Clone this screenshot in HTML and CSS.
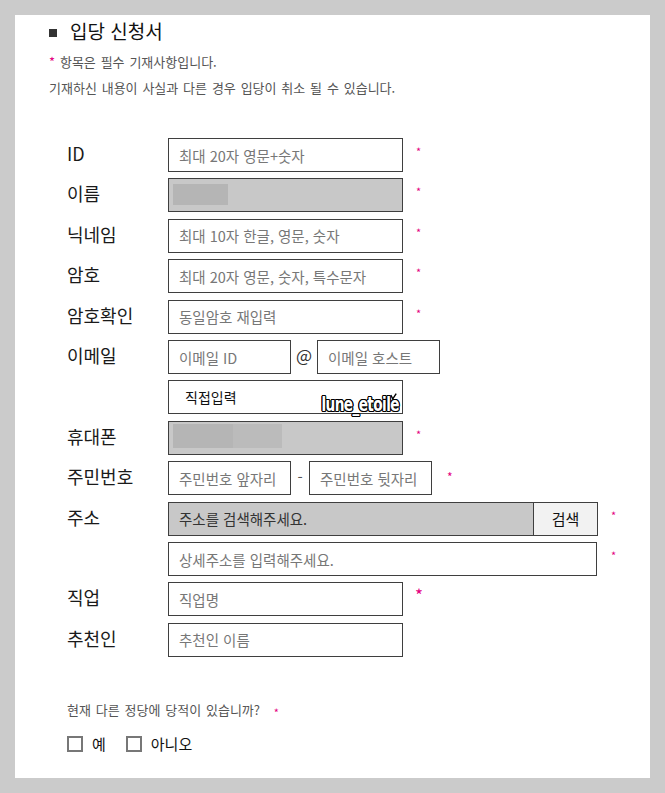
FILE: index.html
```html
<!DOCTYPE html>
<html lang="ko">
<head>
<meta charset="utf-8">
<title>입당 신청서</title>
<link rel="stylesheet" href="styles.css">
</head>
<body>
<div class="panel">
  <h1 class="title"><span class="bullet"></span>입당 신청서</h1>
  <p class="note note1"><span class="star">*</span> 항목은 필수 기재사항입니다.</p>
  <p class="note note2">기재하신 내용이 사실과 다른 경우 입당이 취소 될 수 있습니다.</p>

  <div class="form">
    <div class="row">
      <label class="label">ID</label>
      <input class="inp" placeholder="최대 20자 영문+숫자">
      <span class="req">*</span>
    </div>
    <div class="row">
      <label class="label">이름</label>
      <div class="inp gray pad5"><span class="blk b1" style="width:55px"></span></div>
      <span class="req">*</span>
    </div>
    <div class="row">
      <label class="label">닉네임</label>
      <input class="inp" placeholder="최대 10자 한글, 영문, 숫자">
      <span class="req">*</span>
    </div>
    <div class="row">
      <label class="label">암호</label>
      <input class="inp" placeholder="최대 20자 영문, 숫자, 특수문자">
      <span class="req">*</span>
    </div>
    <div class="row">
      <label class="label">암호확인</label>
      <input class="inp" placeholder="동일암호 재입력">
      <span class="req">*</span>
    </div>
    <div class="row">
      <label class="label">이메일</label>
      <input class="inp half" placeholder="이메일 ID">
      <span class="at">@</span>
      <input class="inp half" placeholder="이메일 호스트">
    </div>
    <div class="row">
      <span class="label"></span>
      <div class="inp sel">직접입력
        <span class="wm">lune_etoile</span>
        <svg class="caret" width="7" height="7" viewBox="0 0 7 7"><path d="M0.8 2.2 L2.8 5.8 L6.2 0.6" fill="none" stroke="#000" stroke-width="1.4"/></svg>
      </div>
    </div>
    <div class="row">
      <label class="label">휴대폰</label>
      <div class="inp gray pad3"><span class="blk b1" style="width:60px"></span><span class="blk b2" style="width:49px"></span></div>
      <span class="req">*</span>
    </div>
    <div class="row">
      <label class="label">주민번호</label>
      <input class="inp half" placeholder="주민번호 앞자리">
      <span class="dash">-</span>
      <input class="inp half" placeholder="주민번호 뒷자리">
      <span class="req req-ssn">*</span>
    </div>
    <div class="row">
      <label class="label">주소</label>
      <input class="inp addr gray" placeholder="주소를 검색해주세요." readonly>
      <button class="btn" type="button">검색</button>
      <span class="req">*</span>
    </div>
    <div class="row">
      <span class="label"></span>
      <input class="inp detail" placeholder="상세주소를 입력해주세요.">
      <span class="req req-detail">*</span>
    </div>
    <div class="row">
      <label class="label">직업</label>
      <input class="inp" placeholder="직업명">
      <span class="req big">*</span>
    </div>
    <div class="row">
      <label class="label">추천인</label>
      <input class="inp" placeholder="추천인 이름">
    </div>
  </div>

  <p class="question">현재 다른 정당에 당적이 있습니까? <span class="qstar">*</span></p>
  <div class="choices">
    <label class="choice"><input type="checkbox" class="cb">예</label>
    <label class="choice"><input type="checkbox" class="cb">아니오</label>
  </div>
</div>
</body>
</html>
```

FILE: styles.css
```css
html, body {
  margin: 0;
  padding: 0;
}
body {
  background: #cbcbcb;
  font-family: "Noto Sans CJK KR", "Noto Sans", sans-serif;
}
.panel {
  margin: 15px 0 0 15px;
  width: 635px;
  height: 763px;
  background: #fff;
  box-sizing: border-box;
  padding-top: 4px;
}
.title {
  margin: 0;
  display: flex;
  align-items: center;
  padding-left: 34px;
  height: 24px;
  font-size: 19px;
  line-height: 24px;
  font-weight: normal;
  color: #111;
}
.bullet {
  width: 8px;
  height: 8px;
  background: #333;
  margin-right: 13px;
  margin-top: 3px;
}
.note {
  margin: 0;
  padding-left: 34px;
  font-size: 13px;
  line-height: 20px;
  color: #555;
  word-spacing: 1.2px;
}
.note1 { margin-top: 9px; }
.note2 { margin-top: 6px; }
.star {
  color: #e4007f;
}
.form {
  margin-top: 40px;
  padding-left: 52px;
  display: flex;
  flex-direction: column;
  gap: 6.42px;
}
.row {
  display: flex;
  align-items: flex-start;
  height: 34px;
}
.label {
  width: 101px;
  flex: none;
  line-height: 30px;
  font-size: 18px;
  color: #1a1a1a;
}
.inp {
  box-sizing: border-box;
  flex: none;
  height: 34px;
  width: 235px;
  margin: 0;
  border: 1px solid #3f3f3f;
  border-radius: 0;
  padding: 0 10px;
  font-family: inherit;
  font-size: 14.5px;
  color: #333;
  background: #fff;
  outline: none;
}
.inp::placeholder {
  color: #777;
}
.gray {
  background: #c8c8c8;
}
.pad5 { padding: 5px 4px; display: flex; }
.pad3 { padding: 2px 4px; display: flex; }
.blk { display: block; height: 21px; }
.pad3 .blk { height: 24px; }
.b1 { background: #b5b5b5; }
.b2 { background: #bbbbbb; }
.half { width: 123px; }
.at {
  width: 26px;
  flex: none;
  text-align: center;
  font-size: 17px;
  line-height: 30px;
  color: #333;
}
.dash {
  width: 18px;
  flex: none;
  text-align: center;
  font-size: 15px;
  line-height: 31px;
  color: #555;
}
.sel {
  position: relative;
  display: flex;
  align-items: center;
  padding-left: 16px;
  font-size: 14px;
  color: #111;
}
.wm {
  position: absolute;
  right: 3px;
  bottom: -2px;
  font-family: "DejaVu Sans Condensed", "DejaVu Sans", sans-serif;
  font-weight: bold;
  font-size: 20px;
  line-height: 22px;
  color: #fff;
  transform: scaleX(0.76);
  transform-origin: right center;
  letter-spacing: -0.8px;
  text-shadow: 1px 0 0 #000, -1px 0 0 #000, 0 1px 0 #000, 0 -1px 0 #000,
    1px 1px 0 #000, -1px -1px 0 #000, 1px -1px 0 #000, -1px 1px 0 #000,
    1.5px 0 0 #000, -1.5px 0 0 #000;
}
.caret {
  position: absolute;
  right: 5px;
  top: 12px;
}
.addr {
  width: 366px;
  color: #333;
}
.addr::placeholder { color: #333; }
.btn {
  box-sizing: border-box;
  flex: none;
  width: 64px;
  height: 34px;
  margin: 0;
  border: 1px solid #3f3f3f;
  border-left: none;
  border-radius: 0;
  background: #f2f2f2;
  font-family: inherit;
  font-size: 15px;
  color: #111;
  padding: 0;
}
.detail { width: 429px; }
.req {
  flex: none;
  color: #e4007f;
  font-size: 11px;
  line-height: 11px;
  margin-left: 13px;
  margin-top: 8px;
}
.req-ssn { margin-left: 15px; margin-top: 10px; font-size: 12px; }
.req-detail { margin-left: 14px; }
.big {
  font-size: 17px;
  line-height: 17px;
  margin-left: 12px;
  margin-top: 4px;
}
.question {
  margin: 43px 0 0 0;
  padding-left: 52px;
  font-size: 13px;
  line-height: 20px;
  color: #555;
  word-spacing: 1.2px;
}
.qstar {
  color: #e4007f;
  font-size: 11px;
  margin-left: 9px;
  position: relative;
  top: 2px;
}
.choices {
  margin-top: 14px;
  padding-left: 52px;
  display: flex;
  gap: 20px;
  height: 20px;
  align-items: center;
}
.choice {
  display: flex;
  align-items: center;
  gap: 9px;
  font-size: 15px;
  line-height: 20px;
  color: #111;
}
.cb {
  appearance: none;
  -webkit-appearance: none;
  box-sizing: border-box;
  width: 16px;
  height: 16px;
  margin: 0;
  border: 2px solid #777;
  background: #fff;
}
```
